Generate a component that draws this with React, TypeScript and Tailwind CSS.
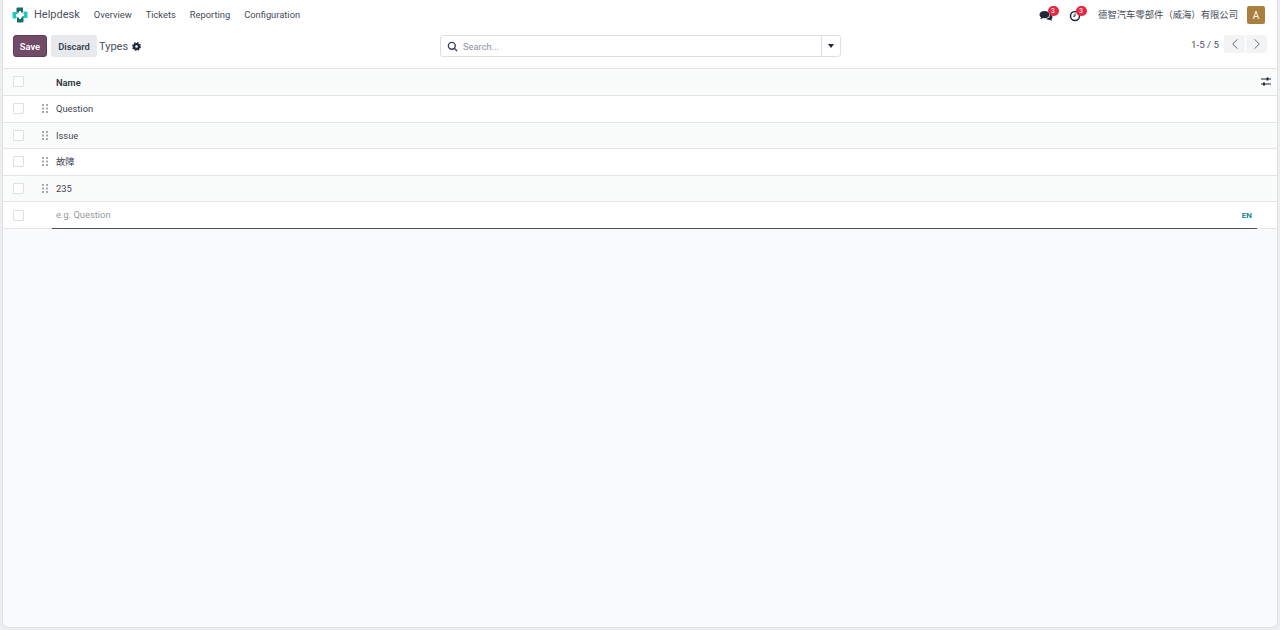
import { ChevronLeft, ChevronRight } from "lucide-react";

const font = { fontFamily: 'Roboto, "Noto Sans CJK SC", sans-serif' };

function Logo() {
  return (
    <svg width="16" height="16" viewBox="0 0 16 16" className="shrink-0">
      <path d="M4.500 1.500A1 1 0 0 1 5.500 .5H11V5.500H9V4H7V5.500H4.500Z" fill="#1c6b66" />
      <path d="M11.500 4.500H14.500A1 1 0 0 1 15.500 5.500V11H10V9H12V7H11.500Z" fill="#1ccbb8" />
      <path d="M11.500 14.500A1 1 0 0 1 10.500 15.500H5V10.500H7V12H9V10.500H11.500Z" fill="#1c6b66" />
      <path d="M4.500 11.500H1.500A1 1 0 0 1 .5 10.500V5H6V7H4V9H4.500Z" fill="#1ccbb8" />
    </svg>
  );
}

function Check() {
  return <div className="w-[9px] h-[9px] border border-[#dcdfe3] bg-white rounded-[1px] box-content" />;
}

function Handle() {
  return (
    <svg width="6" height="9" viewBox="0 0 6 9">
      {[0, 4].flatMap((x) =>
        [0, 3.500, 7].map((y) => <rect key={`${x}-${y}`} x={x} y={y} width="2" height="2" fill="#a6abb1" />)
      )}
    </svg>
  );
}

function Row({ label, alt }: { label: string; alt: boolean }) {
  return (
    <div className={`h-[26.600px] flex items-center border-b border-[#e3e5e8] ${alt ? "bg-[#fafbfb]" : "bg-white"}`}>
      <div className="w-[30px] flex justify-center"><Check /></div>
      <div className="w-[18px] ml-[3px] flex justify-center"><Handle /></div>
      <span className="ml-[2px] pt-[1px] text-[9.330px] text-[#3f4650]">{label}</span>
    </div>
  );
}

export default function App() {
  return (
    <div className="w-[1280px] h-[630px] bg-[#eceef0] overflow-hidden pl-[2px] pr-[2px] pb-[2px]" style={font}>
      <div className="h-full bg-[#f9fafb] rounded-b-[6px] border-b border-x border-[#dfe1e4] flex flex-col">
        <nav className="h-[30px] bg-white flex items-center pl-[9px] pr-[12px] shrink-0">
          <Logo />
          <span className="ml-[6px] text-[11px] text-[#4a515b]">Helpdesk</span>
          <div className="ml-[14px] flex gap-[14px] text-[9.330px] text-[#444b55]">
            <span>Overview</span>
            <span>Tickets</span>
            <span>Reporting</span>
            <span>Configuration</span>
          </div>
          <div className="ml-auto flex items-center">
            <div className="relative w-[15px] h-[12px]">
              <svg width="14" height="12" viewBox="0 0 14 12" className="absolute top-[1px] left-0">
                <path d="M5.500 1C2.500 1 .5 2.600.5 4.600c0 1.100.6 2 1.500 2.700L1.400 9.300 4 8.100c.5.1 1 .2 1.500.2 3 0 5-1.600 5-3.700S8.500 1 5.500 1Z" fill="#1f2937" />
                <path d="M11 4.500c1.500.5 2.500 1.500 2.500 2.800 0 .8-.4 1.500-1 2l.4 1.500-2-.9c-1.500.2-3-.2-3.800-1.100 2.500-.2 4.200-2 3.900-4.300Z" fill="#1f2937" />
              </svg>
              <span className="absolute -top-[3px] left-[8.500px] w-[11px] h-[10px] rounded-full bg-[#e3293f] text-white text-[7px] leading-[10px] text-center">3</span>
            </div>
            <div className="relative w-[15px] h-[12px] ml-[15px]">
              <svg width="12" height="12" viewBox="0 0 12 12" className="absolute top-[1px] left-0">
                <circle cx="6" cy="6" r="4.500" fill="none" stroke="#1f2937" strokeWidth="1.500" />
                <path d="M6 3.500V6.200H4" fill="none" stroke="#1f2937" strokeWidth="1" />
              </svg>
              <span className="absolute -top-[3px] left-[6.500px] w-[11px] h-[10px] rounded-full bg-[#e3293f] text-white text-[7px] leading-[10px] text-center">3</span>
            </div>
            <span className="ml-[14px] text-[9.330px] text-[#444b55]">德智汽车零部件（威海）有限公司</span>
            <div className="ml-[9px] w-[18px] h-[18px] rounded-[2px] bg-[#a9813c] text-white text-[10px] flex items-center justify-center">A</div>
          </div>
        </nav>

        <div className="h-[38.500px] bg-white relative flex items-start pl-[10px] pr-[10px] pt-[5px] border-b border-[#e3e5e8] shrink-0">
          <button className="h-[22px] w-[34px] pt-[1px] rounded-[3px] bg-[#714b67] text-white text-[9.330px] font-semibold border border-[#5f3f57]">Save</button>
          <button className="ml-[4px] h-[22px] w-[46px] pt-[1px] rounded-[3px] bg-[#e7e9ed] text-[#374151] text-[9.330px] font-semibold">Discard</button>
          <span className="ml-[2px] leading-[24px] text-[11px] text-[#4a515b]">Types</span>
          <svg width="9" height="9" viewBox="0 0 24 24" className="ml-[4px] mt-[7px]" fill="none">
            <circle cx="12" cy="12" r="6.500" stroke="#1f2937" strokeWidth="6" />
            <circle cx="12" cy="12" r="10" stroke="#1f2937" strokeWidth="4" strokeDasharray="4 3.850" />
          </svg>
          <div className="absolute left-[437px] top-[5px] w-[401px] h-[22px] bg-white border border-[#dcdfe3] rounded-[3px] flex items-center">
            <svg width="11" height="11" viewBox="0 0 24 24" className="ml-[6px]" fill="none" stroke="#374151" strokeWidth="3">
              <circle cx="10.500" cy="10.500" r="7.500" />
              <path d="M16 16L22 22" />
            </svg>
            <span className="ml-[5px] pt-[1px] text-[9.330px] text-[#8b929b]">Search...</span>
            <div className="ml-auto h-full w-[19px] border-l border-[#dcdfe3] flex items-center justify-center">
              <div className="w-0 h-0 border-x-[3.500px] border-x-transparent border-t-[4px] border-t-[#1f2937]" />
            </div>
          </div>
          <div className="ml-auto flex items-start">
            <span className="text-[9.750px] leading-[19px] text-[#4a515b] mr-[5px]">1-5 / 5</span>
            <div className="flex gap-[1px]">
              <div className="w-[21px] h-[18px] bg-[#f2f3f5] rounded-l-[3px] flex items-center justify-center"><ChevronLeft size={18} strokeWidth={1.250} color="#5b626c" /></div>
              <div className="w-[21px] h-[18px] bg-[#f2f3f5] rounded-r-[3px] flex items-center justify-center"><ChevronRight size={18} strokeWidth={1.250} color="#5b626c" /></div>
            </div>
          </div>
        </div>

        <div className="h-[27.500px] bg-[#fafbfb] flex items-center border-b border-[#e3e5e8] shrink-0">
          <div className="w-[30px] flex justify-center"><Check /></div>
          <span className="ml-[23px] pt-[2px] text-[9.330px] font-semibold text-[#2f3640]">Name</span>
          <svg width="10" height="9" viewBox="0 0 10 9" className="ml-auto mr-[6px]">
            <path d="M0 2H10M0 7H10" stroke="#1f2937" strokeWidth="1" />
            <rect x="5.500" y="0.500" width="2" height="3" fill="#1f2937" />
            <rect x="2" y="5.500" width="2" height="3" fill="#1f2937" />
          </svg>
        </div>

        <div className="shrink-0">
          <Row label="Question" alt={false} />
          <Row label="Issue" alt={true} />
          <Row label="故障" alt={false} />
          <Row label="235" alt={true} />
          <div className="relative h-[26.600px] bg-white flex items-center border-b border-[#e3e5e8]">
            <div className="w-[30px] flex justify-center"><Check /></div>
            <span className="ml-[23px] text-[9.330px] text-[#949aa2]">e.g. Question</span>
            <span className="ml-auto mr-[25px] pt-[1px] text-[8px] font-semibold text-[#017e84]">EN</span>
            <div className="absolute left-[49px] right-[20px] -bottom-[1px] h-[1px] bg-[#4b5058]" />
          </div>
        </div>
      </div>
    </div>
  );
}
